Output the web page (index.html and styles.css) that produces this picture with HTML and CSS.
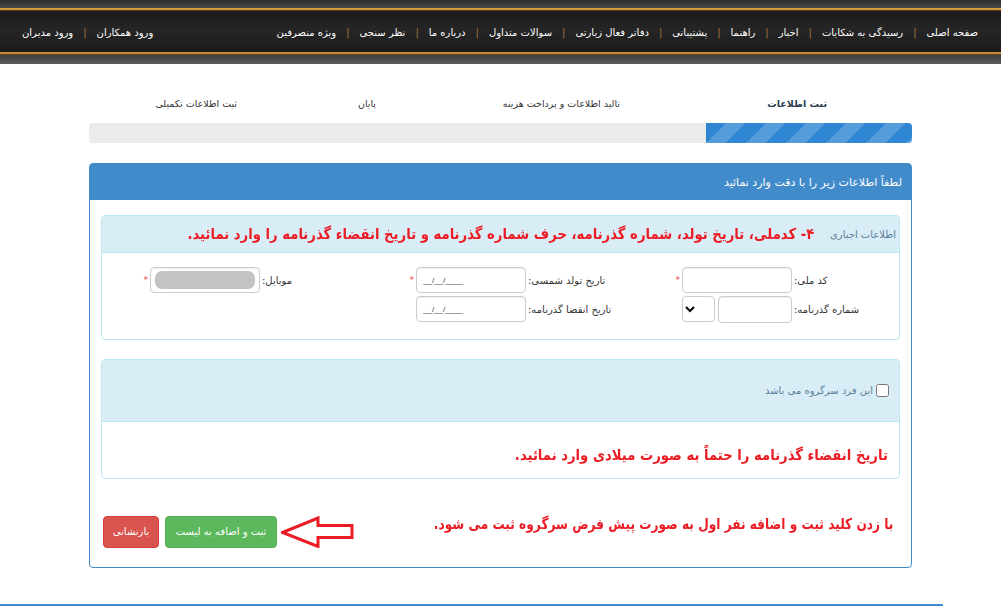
FILE: index.html
```html
<!DOCTYPE html>
<html lang="fa" dir="rtl">
<head>
    <meta charset="UTF-8">
    <meta name="viewport" content="width=device-width, initial-scale=1.0">
    <title>ثبت اطلاعات</title>
    <link rel="stylesheet" href="styles.css">
</head>
<body>

    <header class="topbar">
        <nav class="menu">
            <a href="#">صفحه اصلی</a>
            <a href="#">رسیدگی به شکایات</a>
            <a href="#">اخبار</a>
            <a href="#">راهنما</a>
            <a href="#">پشتیبانی</a>
            <a href="#">دفاتر فعال زیارتی</a>
            <a href="#">سوالات متداول</a>
            <a href="#">درباره ما</a>
            <a href="#">نظر سنجی</a>
            <a href="#">ویژه منصرفین</a>
        </nav>
        <nav class="menu">
            <a href="#">ورود همکاران</a>
            <a href="#">ورود مدیران</a>
        </nav>
    </header>

    <div class="steps">
        <div class="step step-1 active">ثبت اطلاعات</div>
        <div class="step step-2">تالید اطلاعات و پرداخت هزینه</div>
        <div class="step step-3">پایان</div>
        <div class="step step-4">ثبت اطلاعات تکمیلی</div>
    </div>
    <div class="progress">
        <div class="progress-bar"></div>
    </div>

    <div class="panel">
        <div class="panel-heading">لطفاً اطلاعات زیر را با دقت وارد نمائید</div>
        <div class="panel-body">

            <div class="box">
                <div class="box-heading">
                    <span class="box-title">اطلاعات اجباری</span>
                    <span class="alert-text">۴- کدملی، تاریخ تولد، شماره گذرنامه، حرف شماره گذرنامه و تاریخ انقضاء گذرنامه را وارد نمائید.</span>
                </div>
                <div class="box-body">
                    <div class="form-row">
                        <div class="field">
                            <label for="national_code">کد ملی:</label>
                            <input type="text" id="national_code">
                            <span class="req">*</span>
                        </div>
                        <div class="field">
                            <label for="birth_date">تاریخ تولد شمسی:</label>
                            <input type="text" id="birth_date" class="date" placeholder="__/__/____">
                            <span class="req">*</span>
                        </div>
                        <div class="field">
                            <label>موبایل:</label>
                            <div class="fake-input"><span class="masked"></span></div>
                            <span class="req">*</span>
                        </div>
                    </div>
                    <div class="form-row">
                        <div class="field">
                            <label for="passport">شماره گذرنامه:</label>
                            <input type="text" id="passport" class="passport">
                            <select class="letter"><option></option></select>
                        </div>
                        <div class="field">
                            <label for="expire_date">تاریخ انقضا گذرنامه:</label>
                            <input type="text" id="expire_date" class="date" placeholder="__/__/____">
                        </div>
                    </div>
                </div>
            </div>

            <div class="box box-group">
                <div class="box-heading tall">
                    <label class="check"><input type="checkbox"> این فرد سرگروه می باشد</label>
                </div>
                <div class="box-note">
                    <span class="alert-text">تاریخ انقضاء گذرنامه را حتماً به صورت میلادی وارد نمائید.</span>
                </div>
            </div>

            <div class="actions">
                <div class="actions-note">
                    <span class="alert-text narrow">با زدن کلید ثبت و اضافه نفر اول به صورت پیش فرض سرگروه ثبت می شود.</span>
                </div>
                <div class="buttons">
                    <svg class="arrow" width="73" height="32" viewBox="0 0 73 32">
                        <polygon points="1.5,16.5 37,2 37,9.5 71,9.5 71,21.5 37,21.5 37,30.5" fill="none" stroke="#ec1c24" stroke-width="3" stroke-linejoin="miter"/>
                    </svg>
                    <button type="button" class="btn btn-success">ثبت و اضافه به لیست</button>
                    <button type="button" class="btn btn-danger">بازنشانی</button>
                </div>
            </div>

        </div>
    </div>

    <div class="footer-line"></div>

</body>
</html>
```

FILE: styles.css
```css
body {
    margin: 0;
    font-family: "DejaVu Sans", sans-serif;
    direction: rtl;
    background: #fff;
    color: #333;
}
.topbar {
    height: 64px;
    box-sizing: border-box;
    padding: 0 23px 0 22px;
    display: flex;
    justify-content: space-between;
    align-items: center;
    background: linear-gradient(#2e2e2e 0, #484848 8px, #c8892e 8px, #f3b34b 9px, #9a6420 10px, #1b1b1b 11px, #262626 30px, #1a1a1a 52px, #b07424 52px, #f0ac44 53px, #8a5a1c 54px, #3c3c3c 55px, #5e5e5e 64px);
}
.menu {
    display: flex;
    align-items: center;
}
.menu a {
    color: #fff;
    text-decoration: none;
    font-size: 10px;
}
.menu a + a::before {
    content: "|";
    color: #a37a3e;
    margin: 0 10px;
}
.steps {
    width: 823px;
    box-sizing: border-box;
    margin: 29px auto 0;
    padding-right: 85px;
    height: 20px;
    display: flex;
    align-items: center;
    font-size: 9.5px;
    color: #333;
}
.step-1 { width: 207px; }
.step-2 { width: 244px; }
.step-3 { width: 139px; }
.step.active {
    font-size: 9.5px;
    font-weight: bold;
    color: #2c3e50;
}
.progress {
    width: 823px;
    height: 20px;
    margin: 10px auto 0;
    background: #ebebeb;
    border-radius: 4px;
    overflow: hidden;
}
.progress-bar {
    width: 25%;
    height: 100%;
    background-color: #2f86d3;
    background-image: linear-gradient(-45deg, rgba(255, 255, 255, .18) 25%, transparent 25%, transparent 50%, rgba(255, 255, 255, .18) 50%, rgba(255, 255, 255, .18) 75%, transparent 75%, transparent);
    background-size: 40px 40px;
}
.panel {
    width: 823px;
    box-sizing: border-box;
    margin: 20px auto 0;
    border: 1px solid #428bca;
    border-radius: 4px;
}
.panel-heading {
    height: 36px;
    padding: 0 9px;
    display: flex;
    align-items: center;
    background: #428bca;
    color: #fff;
    font-size: 11px;
}
.panel-body {
    padding: 15px 11px 0;
}
.box {
    border: 1px solid #bce8f1;
    border-radius: 4px;
    overflow: hidden;
}
.box-heading {
    height: 36px;
    padding: 0 3px 0 10px;
    display: flex;
    align-items: center;
    gap: 16px;
    background: #d9edf7;
    border-bottom: 1px solid #bce8f1;
    white-space: nowrap;
}
.box-heading.tall {
    height: 61px;
    padding-right: 10px;
}
.box-title {
    font-size: 10px;
    color: #5a7d96;
}
.alert-text {
    display: inline-block;
    font-size: 15px;
    font-weight: bold;
    color: #ec1c24;
    white-space: nowrap;
    transform: scaleX(.88);
    transform-origin: right center;
}
.alert-text.narrow {
    transform: scaleX(.81);
}
.box-body {
    padding: 14px 15px 17px;
    display: flex;
    flex-direction: column;
    gap: 3px;
}
.form-row {
    display: grid;
    grid-template-columns: repeat(3, 266px);
}
.field {
    display: flex;
    align-items: center;
    height: 26px;
}
.field label {
    width: 90px;
    text-align: left;
    font-size: 10px;
    color: #333;
}
.field input,
.fake-input {
    width: 110px;
    height: 26px;
    box-sizing: border-box;
    margin-right: 2px;
    padding: 0 6px;
    border: 1px solid #ccc;
    border-radius: 4px;
    box-shadow: inset 0 1px 1px rgba(0, 0, 0, .075);
    font-size: 10px;
    font-family: "DejaVu Sans", sans-serif;
}
.field input.date {
    direction: ltr;
    text-align: left;
    font-family: "Liberation Sans", sans-serif;
    font-size: 8px;
}
.field input.date::placeholder {
    color: #333;
}
.field input.passport {
    width: 74px;
    height: 27px;
}
.fake-input {
    padding: 3px 4px;
}
.masked {
    display: block;
    height: 100%;
    background: #c3c3c3;
    border-radius: 7px;
    filter: blur(0.6px);
}
.req {
    margin-right: 2px;
    color: #e53c3c;
    font-size: 9px;
}
.letter {
    width: 33px;
    height: 26px;
    margin-right: 3px;
    border: 1px solid #ccc;
    border-radius: 4px;
    background: #fff;
}
.box-group {
    margin-top: 19px;
}
.check {
    display: flex;
    align-items: center;
    gap: 3px;
    font-size: 10px;
    color: #5a7d96;
}
.check input {
    margin: 0;
}
.box-note {
    padding: 20px 11px 10px;
    line-height: 26px;
}
.actions {
    height: 88px;
    padding: 0 7px 0 2px;
    display: flex;
    align-items: center;
}
.actions-note {
    flex: 1;
    min-width: 0;
}
.buttons {
    display: flex;
    flex-shrink: 0;
    align-items: center;
    margin-top: 17px;
}
.arrow {
    margin-left: 4px;
}
.btn {
    height: 32px;
    border: 1px solid transparent;
    border-radius: 4px;
    color: #fff;
    font-size: 10px;
    font-family: "DejaVu Sans", sans-serif;
    padding: 0;
    cursor: pointer;
}
.btn-success {
    width: 112px;
    background: #5cb85c;
    border-color: #4cae4c;
}
.btn-danger {
    width: 56px;
    margin-right: 6px;
    background: #d9534f;
    border-color: #d43f3a;
}
.footer-line {
    width: 943px;
    margin: 36px auto 0 0;
    border-top: 2px solid #428bca;
}
```
